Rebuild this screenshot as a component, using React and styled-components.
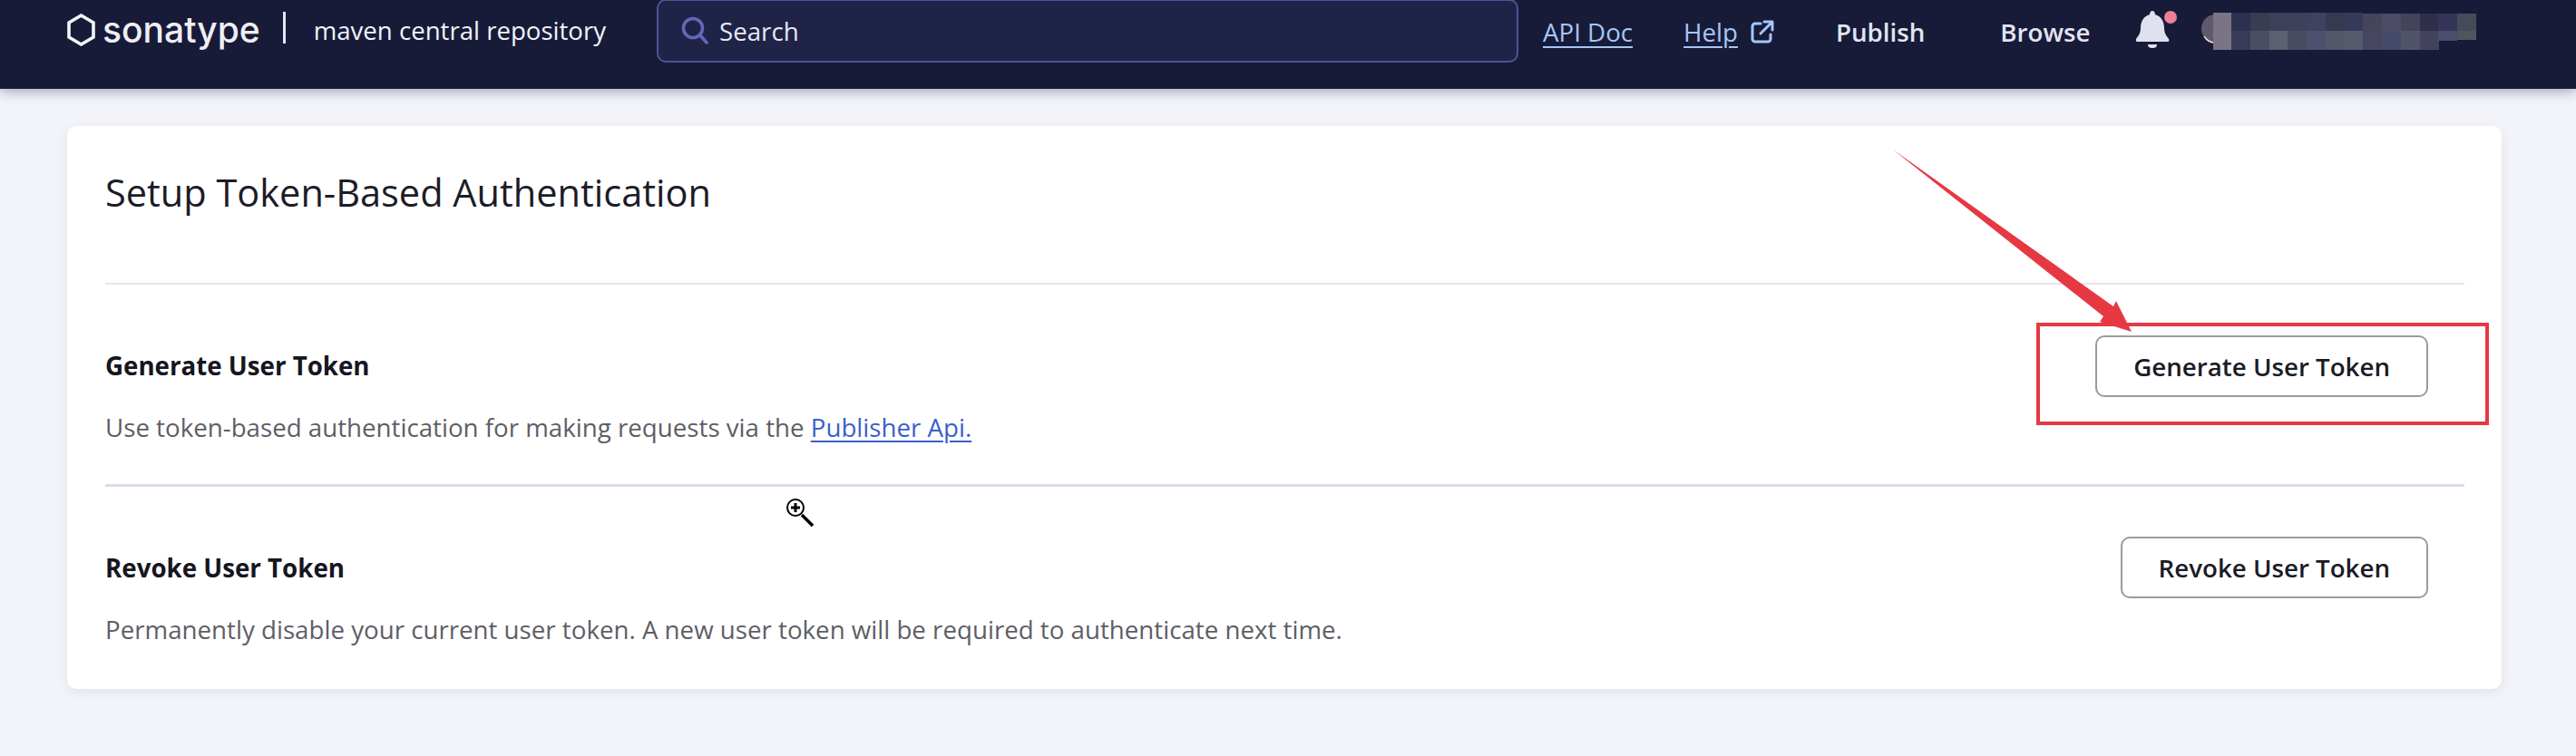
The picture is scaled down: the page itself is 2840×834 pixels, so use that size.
import React from 'react';
import styled, { createGlobalStyle } from 'styled-components';

const Global = createGlobalStyle`
  html, body { margin: 0; padding: 0; background: #f3f4f9; }
  body { font-family: "Open Sans", "Noto Sans", sans-serif; width: 2840px; height: 834px; overflow: hidden; }
`;
const Page = styled.div`position: relative; width: 2840px; height: 834px;`;
const Header = styled.header`
  height: 98px; background: #171b38; display: flex; align-items: flex-start; box-sizing: border-box;
  padding: 0 0 0 74px; color: #fff; box-shadow: 0 2px 14px rgba(40,44,70,.45); position: relative;
`;
const Logo = styled.div`display: flex; align-items: center; height: 66px; width: 650px; flex: none;`;
const Brand = styled.span`font-family: Inter, sans-serif; font-size: 39px; line-height: 66px; margin-left: 8px; font-weight: 500; color: #eeeef4;`;
const Bar = styled.span`width: 3px; height: 35px; background: #dfe8f5; margin: 0 31px 5px 25px;`;
const Product = styled.span`font-size: 27.6px; line-height: 64px; font-weight: 400; color: #f2f3f8;`;
const Search = styled.div`
  width: 950px; height: 70px; margin-top: -1px; box-sizing: border-box; flex: none;
  background: #1f2348; border: 2px solid #4d5298; border-radius: 10px;
  display: flex; align-items: center; padding-left: 25px; gap: 12px; font-size: 27.7px; color: #e8e9f3;
`;
const Nav = styled.nav`display: flex; align-items: center; height: 70px; margin-left: 27px;`;
const DocLink = styled.a`
  font-size: 27.7px; color: #a6c6f5; text-decoration: underline; text-underline-offset: 5px; margin-right: ${p => p.$mr}px;
`;
const ExtIcon = styled.svg`width: 26px; height: 26px; margin-right: 68px; margin-left: 14px;`;
const NavItem = styled.span`font-size: 27.7px; font-weight: 600; color: #e3e4f2; margin-right: ${p => p.$mr}px;`;
const BellWrap = styled.div`width: 48px; height: 42px; margin-top: -4px;`;
const Masked = styled.svg`width: 326px; height: 44px; margin-left: 24px; margin-top: -2px;`;
const Card = styled.main`
  margin: 41px 0 0 74px; width: 2684px; height: 621px; box-sizing: border-box; background: #fff; border-radius: 10px;
  box-shadow: 0 3px 12px rgba(60,65,110,.1); padding: 0 41px 0 42px; display: flex; flex-direction: column;
`;
const Title = styled.h1`
  margin: 0; height: 175px; box-sizing: border-box; padding-top: 43px; font-size: 41.5px; line-height: 60px; font-weight: 400; color: #1c1c28;
  border-bottom: 2px solid #e3e4f2;
`;
const Row = styled.section`
  display: flex; justify-content: space-between; align-items: flex-start; box-sizing: border-box; height: ${p => p.$h}px;
  padding-right: 40px;
  border-bottom: ${p => p.$line ? '3px solid #dcddec' : 'none'};
`;
const Copy = styled.div`margin-top: ${p => p.$mt}px;`;
const Heading = styled.h2`margin: 0 0 32px; font-size: 27.7px; line-height: 36px; font-weight: 700; color: #16161f;`;
const Text = styled.p`margin: 0; font-size: 27.7px; line-height: 36px; color: #5e5e66;`;
const Anchor = styled.a`color: #3b5fc9; text-decoration: underline; text-underline-offset: 4px;`;
const Button = styled.button`
  height: 68px; margin-top: ${p => p.$mt}px; padding: 0 40px; box-sizing: border-box; background: #fff; border: 2px solid #9b9b9f; border-radius: 10px;
  font: 600 27.7px "Open Sans", sans-serif; color: #1b1b26;
`;
const Overlay = styled.svg`position: absolute; left: 0; top: 0; width: 2840px; height: 834px; pointer-events: none;`;

const colX = [2440, 2460, 2481, 2502, 2522, 2543, 2564, 2584, 2605, 2626, 2647, 2668, 2688, 2709];
const topRow = ['#7a7484', '#2c3150', '#3a3c52', '#3c4058', '#3f405a', '#3f4160', '#37394f', '#363a58', '#45445c', '#4c4c64', '#43445a', '#2f2f4a', '#35355a', '#464a5a'];
const lowRow = ['#7a7484', '#383b58', '#4b4d62', '#5c6070', '#4a4c62', '#4e5070', '#54566a', '#555a6c', '#464660', '#454a68', '#50546a', '#42425c', '#4a4e6c', '#50545e'];

export default function App() {
  return (
    <Page>
      <Global />
      <Header>
        <Logo>
          <svg width="31" height="36" viewBox="0 0 31 36" fill="none" stroke="#f4f4f8" strokeWidth="3.6" strokeLinejoin="miter"><path d="M15.5 2 29 10V26L15.5 34 2 26V10Z" /></svg>
          <Brand>sonatype</Brand>
          <Bar />
          <Product>maven central repository</Product>
        </Logo>
        <Search>
          <svg width="30" height="32" viewBox="0 0 30 32" fill="none" stroke="#6268b8" strokeWidth="3.6" strokeLinecap="round"><circle cx="13" cy="13" r="10.5" /><path d="M21 21 28 29" /></svg>
          Search
        </Search>
        <Nav>
          <DocLink $mr={56}>API Doc</DocLink>
          <DocLink $mr={0}>Help</DocLink>
          <ExtIcon viewBox="0 0 26 26" fill="none" stroke="#a6c6f5" strokeWidth="3" strokeLinecap="round" strokeLinejoin="round"><path d="M11 4H5a3 3 0 0 0-3 3v14a3 3 0 0 0 3 3h14a3 3 0 0 0 3-3v-5M11 15 23 3M15 2h9v9" /></ExtIcon>
          <NavItem $mr={83}>Publish</NavItem>
          <NavItem $mr={51}>Browse</NavItem>
          <BellWrap>
            <svg width="48" height="42" viewBox="0 0 48 42"><path d="M18 0c2 0 3 2 3 4 7 2 10 8 10 15 0 6 3 9 5 12 1 2 0 3-2 3H2c-2 0-3-1-2-3 2-3 5-6 5-12 0-7 3-13 10-15 0-2 1-4 3-4Z" fill="#dfe0f0" /><path d="M13 37h10c0 3-2 4-5 4s-5-1-5-4Z" fill="#dfe0f0" /><circle cx="38" cy="7" r="7" fill="#ee7f95" /></svg>
          </BellWrap>
          <Masked viewBox="2427 11 326 44">
            <path d="M2441 15c-9 1-14 8-14 16 0 7 5 13 14 15Z" fill="#5e5a6a" />
            <path d="M2430 39c3 5 7 7 12 7" fill="none" stroke="#e8cfd8" strokeWidth="1.5" />
            {colX.map((x, i) => <rect key={'t' + x} x={x} y={i < 8 ? 13 : 14} width={21} height={i < 8 ? 20 : 19} fill={topRow[i]} />)}
            {colX.map((x, i) => <rect key={'b' + x} x={x} y={33} width={21} height={i < 12 ? 21 : i === 12 ? 11 : 10} fill={lowRow[i]} />)}
          </Masked>
        </Nav>
      </Header>
      <Card>
        <Title>Setup Token-Based Authentication</Title>
        <Row $h={223} $line>
          <Copy $mt={71}>
            <Heading>Generate User Token</Heading>
            <Text>Use token-based authentication for making requests via the <Anchor>Publisher Api.</Anchor></Text>
          </Copy>
          <Button $mt={56}>Generate User Token</Button>
        </Row>
        <Row $h={222}>
          <Copy $mt={71}>
            <Heading>Revoke User Token</Heading>
            <Text>Permanently disable your current user token. A new user token will be required to authenticate next time.</Text>
          </Copy>
          <Button $mt={55}>Revoke User Token</Button>
        </Row>
      </Card>
      <Overlay viewBox="0 0 2840 834">
        <rect x="2247" y="358" width="495" height="109" fill="none" stroke="#e63843" strokeWidth="4" />
        <path d="M2087 165 2330 338 2333 332 2350 366 2315 355 2319 349Z" fill="#e63843" />
        <g fill="none" stroke="#000" strokeWidth="2">
          <circle cx="877" cy="560" r="9" fill="#fff" />
          <path d="M884 568 896 580" strokeWidth="3.5" />
          <path d="M872 560h10M877 555v10" strokeWidth="3" />
        </g>
      </Overlay>
    </Page>
  );
}
